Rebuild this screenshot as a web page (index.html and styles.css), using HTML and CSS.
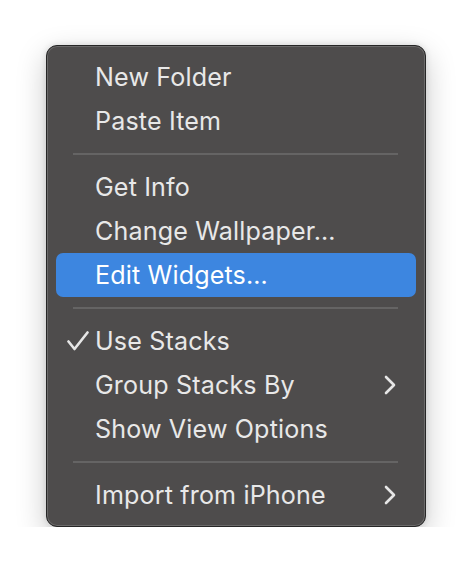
FILE: index.html
```html
<!DOCTYPE html>
<html>
<head>
<meta charset="utf-8">
<link rel="stylesheet" href="styles.css">
</head>
<body>
<div class="menu">
  <div class="item"><span class="label">New Folder</span></div>
  <div class="item"><span class="label">Paste Item</span></div>
  <div class="sep"></div>
  <div class="item"><span class="label">Get Info</span></div>
  <div class="item"><span class="label">Change Wallpaper…</span></div>
  <div class="item active"><span class="label">Edit Widgets…</span></div>
  <div class="sep"></div>
  <div class="item">
    <svg class="check" width="22" height="20" viewBox="0 0 22 20"><path d="M1.5 10.5 L7.5 18 L20.5 1.5" fill="none" stroke="#e6e6e6" stroke-width="2.6" stroke-linecap="round" stroke-linejoin="round"/></svg>
    <span class="label">Use Stacks</span>
  </div>
  <div class="item">
    <span class="label">Group Stacks By</span>
    <svg class="chev" width="12" height="20" viewBox="0 0 12 20"><path d="M2 2 L10 10 L2 18" fill="none" stroke="#e6e6e6" stroke-width="2.6" stroke-linecap="round" stroke-linejoin="round"/></svg>
  </div>
  <div class="item"><span class="label">Show View Options</span></div>
  <div class="sep"></div>
  <div class="item">
    <span class="label">Import from iPhone</span>
    <svg class="chev" width="12" height="20" viewBox="0 0 12 20"><path d="M2 2 L10 10 L2 18" fill="none" stroke="#e6e6e6" stroke-width="2.6" stroke-linecap="round" stroke-linejoin="round"/></svg>
  </div>
</div>
</body>
</html>
```
FILE: styles.css
```css
html, body {
  margin: 0;
  padding: 0;
  background: #ffffff;
}
body {
  padding: 45px 0 0 46px;
  font-family: "Inter", "Noto Sans", sans-serif;
}
.menu {
  box-sizing: border-box;
  width: 380px;
  height: 482px;
  padding: 9px 9px;
  background: #4e4c4c;
  border: 1px solid #262626;
  border-radius: 11px;
  box-shadow: inset 0 0 0 1px #6b6a6a, 0 10px 30px rgba(0,0,0,0.22), 0 0 6px rgba(0,0,0,0.12);
  display: flex;
  flex-direction: column;
}
.item {
  height: 44px;
  flex: none;
  display: flex;
  align-items: center;
  position: relative;
  padding-left: 39px;
  padding-right: 20px;
  border-radius: 7px;
  color: #e8e8e8;
  font-size: 25.1px;
  letter-spacing: 0.15px;
}
.item.active {
  background: #3d86e0;
  color: #ffffff;
}
.label {
  flex: 1;
  white-space: nowrap;
}
.check {
  position: absolute;
  left: 11px;
  top: 12px;
}
.chev {
  flex: none;
}
.sep {
  flex: none;
  height: 22px;
  display: flex;
  align-items: center;
  margin: 0 18px 0 17px;
}
.sep::before {
  content: "";
  display: block;
  height: 2px;
  width: 100%;
  background: #656464;
}
```
